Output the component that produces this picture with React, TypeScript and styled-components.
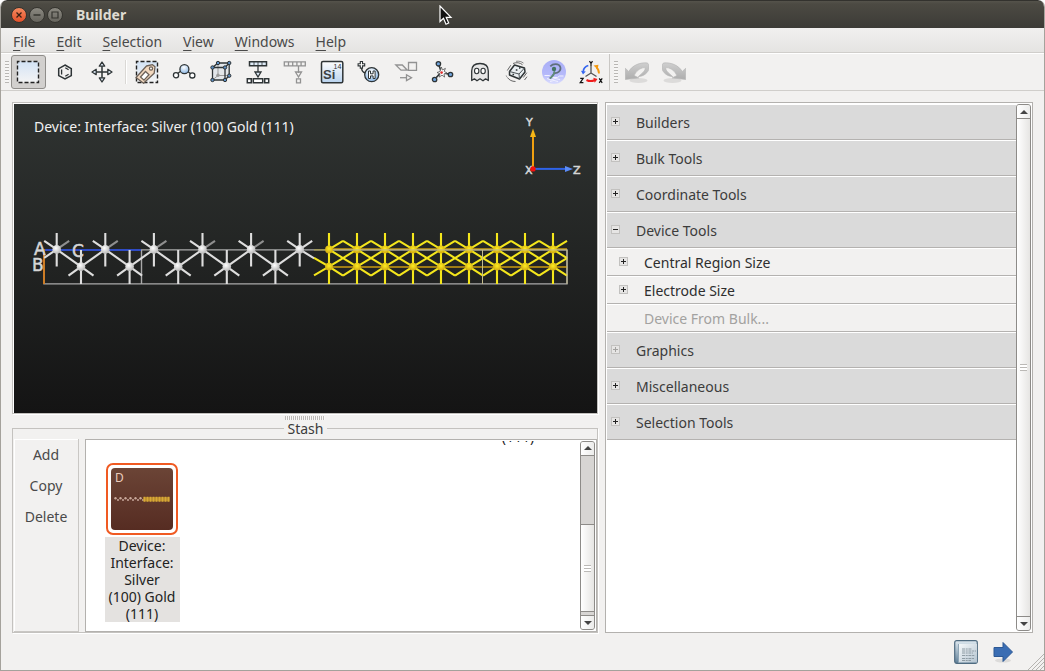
import React from 'react';
import styled, { createGlobalStyle, css } from 'styled-components';

const GlobalStyle = createGlobalStyle`
  *, *::before, *::after { box-sizing: border-box; }
  html, body { margin: 0; background: #fff; }
  body, button {
    font-family: "Noto Sans", "Open Sans", sans-serif;
    font-size: 14px;
    line-height: 20px;
    color: #3c3c3c;
  }
  button { border: 0; padding: 0; background: none; }
  svg { display: block; flex: none; }
`;

/* ---------- window frame ---------- */

const Window = styled.div`
  display: flex;
  flex-direction: column;
  min-height: 100vh;
  background: #f2f1f0;
  border: solid #a5a29c;
  border-width: 0 1px 1px;
  border-radius: 7px 7px 0 0;
  overflow: hidden;
`;

const TitleBar = styled.header`
  display: flex;
  align-items: center;
  gap: 2px;
  height: 28px;
  margin: 0 -1px;
  padding-left: 11px;
  border-top: 1px solid #33322e;
  border-radius: 7px 7px 0 0;
  background: linear-gradient(#55534b, #4c4a43 3px, #3c3b37);
`;

const WindowButton = styled.button<{ $close?: boolean }>`
  display: grid;
  place-items: center;
  width: 16px;
  height: 16px;
  border-radius: 50%;
  border: 1px solid #35342f;
  background: ${p => (p.$close ? 'linear-gradient(#f58a5f, #e4502a)' : 'linear-gradient(#8b8981, #66645d)')};
`;

const WindowTitle = styled.h1`
  margin: 0 0 0 11px;
  font-size: 14px;
  line-height: 20px;
  font-weight: 700;
  color: #dfdbd2;
`;

const MenuBar = styled.nav`
  display: flex;
  height: 25px;
  padding-left: 2px;
  background: linear-gradient(#f1f0ef, #e5e4e2);
  border-bottom: 1px solid #d0cecb;
`;

const MenuButton = styled.button`
  height: 26px;
  padding: 2px 11px 0 10px;
  color: #4a4a4a;
  & > span { text-decoration: underline; text-underline-offset: 3px; }
`;

/* ---------- toolbars ---------- */

const ToolBars = styled.div`
  display: flex;
  height: 38px;
  border-top: 1px solid #fff;
  border-bottom: 1px solid #d0cecb;
`;

const ToolBar = styled.div<{ $divided?: boolean }>`
  display: flex;
  align-items: center;
  gap: 2px;
  padding-left: 4px;
  ${p => p.$divided && css`border-right: 1px solid #c9c7c4;`}
`;

const ToolHandle = styled.span`
  width: 4px;
  height: 22px;
  background: repeating-linear-gradient(#b9b7b4 0 1px, #f7f6f5 1px 3px);
`;

const ToolSeparator = styled.span`
  width: 6px;
  height: 24px;
  padding-left: 3px;
  &::before { content: ''; display: block; width: 2px; height: 24px; background: #dad8d5; border-right: 1px solid #fff; }
`;

const ToolButton = styled.button<{ $active?: boolean }>`
  display: grid;
  place-items: center start;
  width: 35px;
  height: 34px;
  padding-left: 4px;
  border: 1px solid transparent;
  border-radius: 3px;
  ${p => p.$active && css`background: #d2d0ce; border-color: #8f8d8a;`}
`;

/* ---------- main area ---------- */

const Workspace = styled.main`
  display: grid;
  grid-template-columns: minmax(0, 586fr) minmax(0, 428fr);
  gap: 7px;
  flex: 1;
  padding: 11px 11px 0;
`;

const LeftColumn = styled.div`
  display: flex;
  flex-direction: column;
`;

const Viewer = styled.section`
  position: relative;
  flex: 307 1 0;
  min-height: 220px;
  border: 1px solid #c2c0bd;
  box-shadow: inset 1px 1px 0 #fff, 1px 1px 0 #fff;
  padding: 1px 0 0 1px;
`;

const Scene = styled.svg`
  width: 100%;
  height: 100%;
  background: linear-gradient(#303432, #141414);
`;

const SceneTitle = styled.h2`
  position: absolute;
  top: 14px;
  left: 21px;
  margin: 0;
  font-size: 14px;
  line-height: 20px;
  font-weight: 400;
  color: #f0f0f0;
`;

const Splitter = styled.div`
  display: flex;
  justify-content: center;
  height: 6px;
  padding-top: 2px;
  &::before {
    content: '';
    width: 40px;
    height: 4px;
    background: repeating-linear-gradient(90deg, #bcbab7 0 1px, #f9f8f7 1px 2px);
  }
`;

const Stash = styled.fieldset`
  display: flex;
  gap: 6px;
  flex: 209 1 0;
  min-width: 0;
  margin: 0;
  padding: 1px 0 0 1px;
  border: 1px solid #c4c2bf;
  box-shadow: 1px 1px 0 #fff;
`;

const StashLegend = styled.legend`
  margin: 0 auto;
  padding: 0 4px;
  line-height: 18px;
`;

const StashActions = styled.div`
  display: flex;
  flex-direction: column;
  width: 65px;
  padding-top: 1px;
  border: solid #c9c7c4;
  border-width: 0 1px 1px 0;
  box-shadow: inset 1px 1px 0 #fff;
`;

const StashAction = styled.button`
  height: 31px;
  color: #4a4a4a;
`;

const ScrollFrame = styled.div`
  display: flex;
  flex: 1;
  min-width: 0;
  border: 1px solid #b3b1ae;
  padding: 1px;
  background: #fff;
`;

const StashViewport = styled.div`
  flex: 1;
  min-width: 0;
  overflow: hidden;
`;

const StashGrid = styled.div`
  display: grid;
  grid-template-columns: repeat(5, 94px);
  justify-items: center;
  row-gap: 18px;
  margin-top: -13px;
  padding-left: 8px;
`;

const StashItem = styled.figure<{ $column: number }>`
  grid-column: ${p => p.$column};
  display: flex;
  flex-direction: column;
  align-items: center;
  gap: 2px;
  margin: 0;
`;

const Thumbnail = styled.div`
  width: 72px;
  height: 72px;
  padding: 3px;
  border: 2px solid #f05a22;
  border-radius: 7px;
`;

const StashCaption = styled.figcaption<{ $selected?: boolean }>`
  width: 75px;
  padding: 0 3px;
  text-align: center;
  line-height: 17px;
  color: #222;
  ${p => p.$selected && css`background: #e4e2e0;`}
`;

/* ---------- scroll bar ---------- */

const ScrollBar = styled.div`
  display: flex;
  flex-direction: column;
  width: 15px;
  flex: none;
  border: 1px solid #8d8b88;
  border-radius: 3px;
  background: #d7d5d3;
`;

const ScrollButton = styled.button<{ $down?: boolean }>`
  display: grid;
  place-items: center;
  height: 14px;
  background: linear-gradient(90deg, #fff, #ececeb);
  border: 0 solid #8d8b88;
  ${p => (p.$down ? css`border-top-width: 1px; border-radius: 0 0 2px 2px;` : css`border-bottom-width: 1px; border-radius: 2px 2px 0 0;`)}
`;

const ScrollGap = styled.div<{ $grow: number }>`
  flex: ${p => p.$grow} 1 0;
`;

const ScrollThumb = styled.div<{ $grow: number; $edges: boolean }>`
  display: grid;
  place-items: center;
  flex: ${p => p.$grow} 1 0;
  background: linear-gradient(90deg, #fff, #e6e5e3);
  ${p => p.$edges && css`border: solid #8d8b88; border-width: 1px 0;`}
  &::before {
    content: '';
    width: 7px;
    height: 7px;
    background: repeating-linear-gradient(#bbb9b6 0 1px, #fff 1px 3px);
  }
`;

/* ---------- tool tree ---------- */

const ToolTree = styled.aside`
  display: flex;
  min-width: 0;
  border: 1px solid #b3b1ae;
  padding: 1px;
  background: #fff;
`;

const TreeList = styled.div`
  display: flex;
  flex-direction: column;
  flex: 1;
  min-width: 0;
`;

const TreeRow = styled.button<{ $child?: boolean; $muted?: boolean }>`
  display: flex;
  align-items: center;
  gap: 16px;
  text-align: left;
  height: ${p => (p.$child ? 28 : 36)}px;
  padding-top: 2px;
  padding-left: ${p => (p.$child ? 12 : 4)}px;
  background: ${p => (p.$child ? '#f2f1f0' : '#dadada')};
  border: solid;
  border-width: 1px 0;
  border-color: #fff transparent #b4b2b0;
  color: ${p => (p.$muted ? '#a3a2a0' : p.$child ? '#2e2e2e' : '#3c3c3c')};
`;

const ExpandBox = styled.span<{ $dim?: boolean; $hidden?: boolean }>`
  display: grid;
  place-items: center;
  width: 9px;
  height: 9px;
  margin-bottom: 4px;
  border: 1px solid #c2c1bf;
  background: #e6e5e4;
  color: ${p => (p.$dim ? '#a3a2a0' : '#222')};
  ${p => p.$hidden && css`visibility: hidden;`}
`;

const Footer = styled.footer`
  display: flex;
  justify-content: flex-end;
  align-items: center;
  gap: 13px;
  height: 37px;
`;

const FooterButton = styled.button`
  display: grid;
  place-items: center;
  width: 24px;
  height: 24px;
`;

const Pointer = styled.svg`
  position: absolute;
  left: 439px;
  top: 5px;
`;

/* ---------- icons ---------- */

const ink = '#2e3436';
const pale = '#dfebf7';

const Icon = ({ children }: { children: React.ReactNode }) => (
  <svg width="24" height="24" viewBox="0 0 24 24" fill="none" stroke={ink} strokeWidth="1.3" aria-hidden="true">
    {children}
  </svg>
);

const dashed = (
  <rect x="1.5" y="1.5" width="21" height="21" fill="url(#sky)" stroke="#222" strokeWidth="1.4" strokeDasharray="4 2" strokeDashoffset="2" />
);

const Gradients = () => (
  <svg width="0" height="0" aria-hidden="true">
    <defs>
      <linearGradient id="sky" x1="0" y1="0" x2="0" y2="1">
        <stop offset="0" stopColor="#d3e3f5" />
        <stop offset="1" stopColor="#f4f4f4" />
      </linearGradient>
      <linearGradient id="element" x1="0" y1="0" x2="0" y2="1">
        <stop offset="0" stopColor="#fdfdfd" />
        <stop offset="1" stopColor="#b9d3ef" />
      </linearGradient>
      <radialGradient id="ball" cx=".45" cy=".3" r=".8">
        <stop offset="0" stopColor="#fff" />
        <stop offset="1" stopColor="#78abe0" />
      </radialGradient>
      <linearGradient id="lavender" x1="0" y1="0" x2="0" y2="1">
        <stop offset="0" stopColor="#a9aef6" />
        <stop offset=".6" stopColor="#b5b9fa" />
        <stop offset="1" stopColor="#dcdefe" />
      </linearGradient>
      <linearGradient id="grayArrow" x1="0" y1="0" x2="0" y2="1">
        <stop offset="0" stopColor="#cfcfcf" />
        <stop offset="1" stopColor="#adadad" />
      </linearGradient>
      <linearGradient id="paper" x1="0" y1="0" x2="1" y2="1">
        <stop offset="0" stopColor="#f6f9fb" />
        <stop offset="1" stopColor="#b4c4d0" />
      </linearGradient>
      <linearGradient id="cover" x1="0" y1="0" x2="0" y2="1">
        <stop offset="0" stopColor="#dfe9f0" />
        <stop offset="1" stopColor="#5f7f98" />
      </linearGradient>
      <linearGradient id="brown" x1="0" y1="0" x2="0" y2="1">
        <stop offset="0" stopColor="#6b4436" />
        <stop offset="1" stopColor="#562c22" />
      </linearGradient>
      <radialGradient id="silver" cx=".4" cy=".35" r=".7">
        <stop offset="0" stopColor="#fff" />
        <stop offset="1" stopColor="#b4b4b4" />
      </radialGradient>
      <radialGradient id="gold" cx=".5" cy=".4" r=".7">
        <stop offset="0" stopColor="#ffee20" />
        <stop offset="1" stopColor="#c79b10" />
      </radialGradient>
    </defs>
  </svg>
);

type Tool = { label: string; icon: React.ReactNode; active?: boolean };

const selectionTools: Tool[] = [
  { label: 'Select', active: true, icon: dashed },
  {
    label: 'Molecule builder',
    icon: (
      <>
        <path d="M12 5l6.3 3.6v7L12 19l-6.300-3.400v-7z" strokeWidth="1.500" />
        <path d="M8.600 9.500v5M12.300 7.800l3.300 2M12.300 16.300l3.300-2" />
      </>
    ),
  },
  {
    label: 'Move',
    icon: (
      <>
        <path d="M12 5v14M5 12h14" strokeWidth="1.500" />
        <path d="M12 2l2.700 4.200H9.300zM12 22l2.700-4.200H9.300zM2 12l4.200-2.700v5.400zM22 12l-4.200-2.700v5.400z" fill={pale} strokeLinejoin="round" />
      </>
    ),
  },
];

const buildTools: Tool[] = [
  {
    label: 'Tags',
    icon: (
      <>
        {dashed}
        <path d="M1 17.500L11.500 6l6-1.300 2.500 2-.8 6.500L8.500 23.300z" fill="#f3d9c0" stroke="#6d6259" strokeLinejoin="round" />
        <path d="M5.500 17l5-5.500 3.500 3.200-5 5.500z" fill="#fff" stroke="#6d6259" />
        <circle cx="16" cy="8.500" r="1.600" fill="#fff" stroke="#6d6259" />
      </>
    ),
  },
  {
    label: 'Bonds',
    icon: (
      <>
        <path d="M5 14l4-3M15 11l4 3" />
        <circle cx="12.400" cy="9.200" r="4.500" fill="url(#ball)" />
        <circle cx="4" cy="15.200" r="2.600" fill="#fff" />
        <circle cx="20.300" cy="15.400" r="2.600" fill="#fff" />
      </>
    ),
  },
  {
    label: 'Supercell',
    icon: (
      <>
        <path d="M3.500 7.500L9 3h11v12.700L16 20H3.500z" fill="#e2e6ea" stroke="none" />
        <path d="M9 3v12.500h11M9 15.500L3.500 20" stroke="#999" strokeWidth="1" />
        <path d="M3.500 7.500H16V20H3.500zM3.500 7.500L9 3h11.200v12.700L16 20M16 7.500L20.200 3" />
        {[[3.5, 7.5], [16, 7.5], [3.5, 20], [16, 20], [9, 3], [20.2, 3], [20.2, 15.7]].map(([x, y]) => (
          <circle key={`${x}-${y}`} cx={x} cy={y} r="1.700" fill="#5d8fc4" strokeWidth="1" />
        ))}
        <circle cx="9" cy="15.200" r="1.700" fill="#999" stroke="none" />
      </>
    ),
  },
  {
    label: 'Split device',
    icon: (
      <>
        <path d="M3.500 1.800h17v4h-17z" fill={pale} strokeWidth="1.500" />
        <path d="M8 2v3.600M12 2v3.600M16 2v3.600" strokeWidth=".8" />
        <path d="M12 6v7" />
        <path d="M9 12h6l-3 5z" fill={pale} />
        <path d="M1.300 18.800h4v4h-4zM7.300 18.800h9.400v4H7.300zM18.700 18.800h4v4h-4z" fill="#fff" strokeWidth="1.500" />
      </>
    ),
  },
  {
    label: 'Device from bulk',
    icon: (
      <g stroke="#929292">
        <path d="M1.300 1.800h21v4h-21zM5.500 2v3.600M9.700 2v3.600M13.900 2v3.600M18.100 2v3.600" />
        <path d="M15.500 6v7M12.500 12h6l-3 5zM13.500 18.800h4v4h-4z" />
      </g>
    ),
  },
  {
    label: 'Periodic table',
    icon: (
      <>
        <rect x="1.500" y="1.500" width="21.300" height="21.300" rx="1.500" fill="url(#element)" strokeWidth="1.500" />
        <text x="3" y="19" fontFamily="Liberation Sans, sans-serif" fontSize="13" fontWeight="700" fill="#3c4144" stroke="none">Si</text>
        <text x="13.500" y="8.500" fontFamily="Liberation Sans, sans-serif" fontSize="7" fill="#333" stroke="none">14</text>
      </>
    ),
  },
  {
    label: 'Add hydrogen',
    icon: (
      <>
        <path d="M4.500 7c0 3 1 5.500 4 6" />
        <circle cx="14.700" cy="14.700" r="7" fill="url(#ball)" />
        <path d="M11.500 11v7.500h2v-2.600h2.600v2.600h2V11h-2v2.800h-2.600V11z" fill="#fff" strokeWidth="1" />
        <path d="M3.300 1.500h2.200v2.200h2.200v2.200H5.500v2.200H3.300V5.900H1.100V3.700h2.200z" fill="#fff" strokeWidth="1.100" />
      </>
    ),
  },
  {
    label: 'Shear',
    icon: (
      <g stroke="#929292">
        <path d="M1.800 5h6.500l5 5.200H7zM14.500 2.500h8v7.800h-8z" />
        <path d="M6 17.700h7" />
        <path d="M12.500 14.800l5 2.900-5 2.900z" />
      </g>
    ),
  },
  {
    label: 'Optimize geometry',
    icon: (
      <>
        <path d="M7.500 4l2.800 8L4 19M10.500 12.500l9 2" strokeWidth="1.600" />
        <path d="M10.400 7l1 3 3-1.600-1.200 3 2.800 1.600-3 .9.600 3.200-2.600-2-2.800 2 .800-3.300L6 12.500l3-1z" fill="#fff" stroke="#555" strokeWidth=".8" />
        <circle cx="10.600" cy="12.600" r="1.300" fill="#e03030" stroke="none" />
        <circle cx="7.400" cy="3.800" r="2.200" fill="#6fa3dc" />
        <circle cx="19.500" cy="14.500" r="2.200" fill="#6fa3dc" />
        <circle cx="3.600" cy="19.500" r="2.200" fill="#6fa3dc" />
      </>
    ),
  },
  {
    label: 'Ghost atoms',
    icon: (
      <>
        <path d="M3.700 20.500V11c0-5 3.500-7.500 8.300-7.500S20.300 6 20.300 11v9.500l-2.700-1.700-2.600 2-3-2-3 2-2.600-2z" fill="#e7e7e7" strokeLinejoin="round" />
        <ellipse cx="8.700" cy="11" rx="2.200" ry="2.700" fill="#fff" strokeWidth="1.100" />
        <ellipse cx="15.100" cy="11" rx="2.200" ry="2.700" fill="#fff" strokeWidth="1.100" />
      </>
    ),
  },
  {
    label: 'Rattle',
    icon: (
      <>
        <path d="M9.500 5L19.500 8l.5 4-5.500 7L4.500 15V11.500z" fill="#e9eef1" strokeLinejoin="round" strokeWidth="1.500" />
        <path d="M4.500 11.500l9.500 2.500 5.500-6M14 14l.5 5" strokeWidth="1" stroke="#4d5559" />
        <path d="M7.500 14.500h1.600M10.800 10h1.600M14 8h1.400" strokeWidth="1.500" />
        <path d="M2.300 10.500l3.500-5.300M8 3.500c3.500-1.500 7-.8 9.500 1.200M18.300 17.500l3.500-4.800M19.500 20l2.500-3.300M2.500 17.500c1.500 2.500 4.500 4 8 4" stroke="#666" strokeWidth="1" />
        <path d="M11 1.300c3-.5 5.500.3 7.500 1.800M1.200 15.500c.2.700.4 1.200.8 1.700" stroke="#888" strokeWidth="1" />
      </>
    ),
  },
  {
    label: 'Python console',
    icon: (
      <>
        <circle cx="12" cy="12" r="12" fill="url(#lavender)" stroke="none" />
        <path d="M2.500 15.500h5l2 2h6l2-1.500h4M5 18.500l4 1.500 4-1.500 5 1M8 21.500l4-1 4 1" stroke="#f1f2ff" strokeWidth="1" />
        <path d="M8.300 6.300C11 3.500 17 3.300 18.300 7c1.200 4-2.700 6.300-6 6-1.300 2-2.300 4.500-4.600 5.200" stroke="#5f6f7c" strokeWidth="1.700" />
        <circle cx="12" cy="9" r="2.200" fill="#457463" stroke="none" />
        <path d="M12.500 11l-1 4-3.500 3.500" stroke="#5f8f78" strokeWidth="1.500" />
      </>
    ),
  },
  {
    label: 'Rotate axes',
    icon: (
      <>
        <path d="M12 6v7M12 13l-5.500 3.500M12 13l5.500 3.500" stroke="#555" strokeWidth="1.300" />
        <path d="M9.300 5.500C6 6.500 4.500 8.500 4.200 11.500" stroke="#3465f0" strokeWidth="1.700" />
        <path d="M2 10.800l4.800.6-2.800 3z" fill="#3465f0" stroke="none" />
        <path d="M20 13.500c0-2.500-.7-4.500-2.500-6" stroke="#f59a10" strokeWidth="1.800" />
        <path d="M14.500 5.500l5-.7-1 4.400z" fill="#f59a10" stroke="none" />
        <path d="M7.500 20c2.500 1.300 5.500 1.300 8 .3" stroke="#ef1c1c" strokeWidth="2" />
        <path d="M14.300 17.800l4.200 1.200-2.800 3.800z" fill="#ef1c1c" stroke="none" />
        <path d="M10.500 1.200L12 3.500l1.500-2.300M12 3.500V6" stroke="#111" strokeWidth="1.200" />
        <path d="M1.200 18.400h3l-3 4.300h3.200M20.200 18.400l3 4.500M23.200 18.400l-3 4.500" stroke="#111" strokeWidth="1.200" />
      </>
    ),
  },
];

const undoPath = (
  <>
    <ellipse cx="13.500" cy="20.500" rx="9" ry="2.500" fill="#dcdbda" stroke="none" />
    <path
      d="M.3 8.300v11.200l13.500-1.600-4.600-2.300c1.500-4 5.500-7.500 9.800-8 1.800 0 1.500 1.800-.2 3.800-1.600 2-3.800 3.900-5.500 5.200 3.500-.2 6.500-1.600 8.500-3.900 3.200-3.500 3-8.700.4-9.700C15.500 2.200 7.500 5 3.800 11.500z"
      fill="url(#grayArrow)" stroke="#b8b8b8" strokeWidth=".7"
    />
  </>
);

const historyTools: Tool[] = [
  { label: 'Undo', icon: undoPath },
  { label: 'Redo', icon: <g transform="translate(24 0) scale(-1 1)">{undoPath}</g> },
];

const ToolButtons = ({ tools }: { tools: Tool[] }) => (
  <>
    {tools.map(t => (
      <ToolButton key={t.label} aria-label={t.label} $active={t.active}>
        <Icon>{t.icon}</Icon>
      </ToolButton>
    ))}
  </>
);

/* ---------- crystal scene ---------- */

const silverTop = [0, 1, 2, 3, 4, 5].map(i => 42.7 + i * 48.6);
const silverBottom = [0, 1, 2, 3, 4].map(i => 67 + i * 48.6);
const goldColumns = [0, 1, 2, 3, 4, 5, 6, 7, 8].map(i => 315 + i * 28);
const TOP = 144.5;
const LOW = 161.7;

const Crystal = () => (
  <Scene viewBox="0 0 583 307" preserveAspectRatio="xMidYMid meet" fill="none" role="img" aria-label="Silver and gold device">
    <path d="M30 145H553V179H30zM127.500 145v34" stroke="#a9a9a9" strokeWidth="1.400" />
    <path d="M30 145H127" stroke="#2f4bc4" strokeWidth="2" />
    <path d="M30 144v35" stroke="#e07c10" strokeWidth="1.600" />
    <g stroke="#dedede" strokeWidth="2.100">
      {silverTop.map((x, i) => (
        <React.Fragment key={x}>
          <path d={`M${x} 128V161.500M${x} ${TOP}l-12.500-8.500`} />
          <path d={`M${x} ${TOP}l12.500-8.500`} stroke={i === 5 ? '#dedede' : '#8f8f8f'} />
          <path d={i === 5 ? `M${x} ${TOP}l14.500 9` : `M${x} ${TOP}L${x + 24.3} ${LOW}`} />
          <path d={i === 0 ? `M${x} ${TOP}l-12.500 8.500` : `M${x} ${TOP}L${x - 24.3} ${LOW}`} />
        </React.Fragment>
      ))}
      {silverBottom.map(x => (
        <path key={x} d={`M${x} 145V179M${x - 12.5} ${LOW + 9}L${x} ${LOW}l12.500 9`} />
      ))}
    </g>
    {silverTop.map(x => <circle key={x} cx={x} cy={TOP} r="4.300" fill="url(#silver)" />)}
    {silverBottom.map(x => <circle key={x} cx={x} cy={LOW} r="4.300" fill="url(#silver)" />)}
    <path d="M300 145h15" stroke="#a99e45" strokeWidth="1.200" />
    <path d={`M315 ${LOW + 0.5}H553M315 144H553`} stroke="#c99a12" strokeWidth="1.500" />
    <g stroke="#f4e61c" strokeWidth="2.100">
      <path d={`M300 153L315 ${LOW}L300 170.500`} />
      {goldColumns.map(x => (
        <path
          key={x}
          d={`M${x} 128V179M${x} ${TOP}l14-8.500M${x} ${TOP}l14 8.700M${x} ${LOW}l14-8.500M${x} ${LOW}l14 9`}
        />
      ))}
      {goldColumns.slice(1).map(x => (
        <path
          key={x}
          d={`M${x} ${TOP}l-14-8.500M${x} ${TOP}l-14 8.700M${x} ${LOW}l-14-8.500M${x} ${LOW}l-14 9`}
        />
      ))}
    </g>
    {goldColumns.map(x => (
      <React.Fragment key={x}>
        <circle cx={x} cy={TOP} r="3.900" fill="url(#gold)" />
        <circle cx={x} cy={LOW} r="3.900" fill="url(#gold)" />
      </React.Fragment>
    ))}
    <path d="M319 145H553M468.500 145v34M553 145v34" stroke="#c4bc8c" strokeWidth="1" />
    <g fontFamily="DejaVu Sans, sans-serif" fill="#d6d6d6" stroke="#d6d6d6" strokeWidth=".5">
      <text x="20" y="150" fontSize="17">A</text>
      <text x="18" y="166" fontSize="17">B</text>
      <text x="58" y="152" fontSize="17">C</text>
      <text x="512" y="21" fontSize="11">Y</text>
      <text x="511" y="69" fontSize="11">X</text>
      <text x="559" y="69" fontSize="11">Z</text>
    </g>
    <path d="M519 62V31" stroke="#f0a010" strokeWidth="2" />
    <path d="M516 32l3-8.500 3 8.500z" fill="#f7b716" />
    <path d="M521 64h32" stroke="#2f63e8" strokeWidth="2" />
    <path d="M551 61l8 3-8 3z" fill="#5b8cf8" />
    <circle cx="519" cy="64" r="2.700" fill="#f01010" />
  </Scene>
);

/* ---------- small pieces ---------- */

const Scroller = ({ before, thumb, after }: { before: number; thumb: number; after: number }) => (
  <ScrollBar>
    <ScrollButton aria-label="Scroll up">
      <svg width="8" height="4" viewBox="0 0 8 4"><path d="M0 4l4-4 4 4z" fill="#444" /></svg>
    </ScrollButton>
    {before > 0 && <ScrollGap $grow={before} />}
    <ScrollThumb $grow={thumb} $edges={before > 0} />
    {after > 0 && <ScrollGap $grow={after} />}
    <ScrollButton $down aria-label="Scroll down">
      <svg width="8" height="4" viewBox="0 0 8 4"><path d="M0 0l4 4 4-4z" fill="#444" /></svg>
    </ScrollButton>
  </ScrollBar>
);

type Row = { label: string; child?: boolean; open?: boolean; dim?: boolean; leaf?: boolean };

const rows: Row[] = [
  { label: 'Builders' },
  { label: 'Bulk Tools' },
  { label: 'Coordinate Tools' },
  { label: 'Device Tools', open: true },
  { label: 'Central Region Size', child: true },
  { label: 'Electrode Size', child: true },
  { label: 'Device From Bulk...', child: true, leaf: true },
  { label: 'Graphics', dim: true },
  { label: 'Miscellaneous' },
  { label: 'Selection Tools' },
];

export default function App() {
  return (
    <>
      <GlobalStyle />
      <Window>
        <TitleBar>
          <WindowButton $close aria-label="Close">
            <svg width="6" height="6" viewBox="0 0 6 6"><path d="M.5.5l5 5M5.500.5l-5 5" stroke="#3a2014" strokeWidth="1.300" /></svg>
          </WindowButton>
          <WindowButton aria-label="Minimize">
            <svg width="8" height="8" viewBox="0 0 8 8"><path d="M.5 4h7" stroke="#35342f" strokeWidth="1.300" /></svg>
          </WindowButton>
          <WindowButton aria-label="Maximize">
            <svg width="8" height="8" viewBox="0 0 8 8"><path d="M1 1h6v6H1z" fill="none" stroke="#35342f" strokeWidth="1.200" /></svg>
          </WindowButton>
          <WindowTitle>Builder</WindowTitle>
        </TitleBar>
        <MenuBar>
          {['File', 'Edit', 'Selection', 'View', 'Windows', 'Help'].map(m => (
            <MenuButton key={m}><span>{m[0]}</span>{m.slice(1)}</MenuButton>
          ))}
        </MenuBar>
        <ToolBars>
          <ToolBar $divided>
            <ToolHandle />
            <ToolButtons tools={selectionTools} />
            <ToolSeparator />
            <ToolButtons tools={buildTools} />
          </ToolBar>
          <ToolBar>
            <ToolHandle />
            <ToolButtons tools={historyTools} />
          </ToolBar>
        </ToolBars>
        <Workspace>
          <LeftColumn>
            <Viewer>
              <Crystal />
              <SceneTitle>Device: Interface: Silver (100) Gold (111)</SceneTitle>
            </Viewer>
            <Splitter />
            <Stash>
              <StashLegend>Stash</StashLegend>
              <StashActions>
                <StashAction>Add</StashAction>
                <StashAction>Copy</StashAction>
                <StashAction>Delete</StashAction>
              </StashActions>
              <ScrollFrame>
                <StashViewport>
                  <StashGrid>
                    <StashItem $column={5}>
                      <StashCaption>(111)</StashCaption>
                    </StashItem>
                    <StashItem $column={1}>
                      <Thumbnail>
                        <svg width="62" height="62" viewBox="0 0 62 62">
                          <rect width="62" height="62" rx="4" fill="url(#brown)" />
                          <text x="4" y="14" fontFamily="Noto Sans, sans-serif" fontSize="12" fill="#eccdbd">D</text>
                          <g fill="#c9a99c">
                            {[0, 1, 2, 3, 4, 5].map(i => (
                              <React.Fragment key={i}>
                                <circle cx={4.5 + i * 5} cy="30.300" r="1.200" />
                                <circle cx={7 + i * 5} cy="32" r="1" />
                              </React.Fragment>
                            ))}
                          </g>
                          <path d="M32.500 31.200h26" stroke="#a87a2a" strokeWidth="4" />
                          <path d="M32.500 31.200h26" stroke="#d8a936" strokeWidth="5" strokeDasharray="2 1" />
                        </svg>
                      </Thumbnail>
                      <StashCaption $selected>Device: Interface: Silver (100) Gold (111)</StashCaption>
                    </StashItem>
                  </StashGrid>
                </StashViewport>
                <Scroller before={69} thumb={87} after={3} />
              </ScrollFrame>
            </Stash>
          </LeftColumn>
          <ToolTree>
            <TreeList>
              {rows.map(r => (
                <TreeRow key={r.label} $child={r.child} $muted={r.leaf} aria-expanded={r.leaf ? undefined : !!r.open}>
                  <ExpandBox $dim={r.dim} $hidden={r.leaf}>
                    <svg width="5" height="5" viewBox="0 0 5 5">
                      <path d={r.open ? 'M0 2.500h5' : 'M0 2.500h5M2.500 0v5'} stroke="currentColor" />
                    </svg>
                  </ExpandBox>
                  {r.label}
                </TreeRow>
              ))}
            </TreeList>
            <Scroller before={0} thumb={1} after={0} />
          </ToolTree>
        </Workspace>
        <Footer>
          <FooterButton aria-label="Log">
            <svg width="24" height="24" viewBox="0 0 24 24">
              <rect x=".7" y=".7" width="22.600" height="22.600" rx="2" fill="url(#cover)" stroke="#4f6b80" strokeWidth="1.200" />
              <path d="M4.500 4H23v18.500H4.500z" fill="url(#paper)" />
              <path d="M4.500 4v18.500" stroke="#8fa6b6" />
              <path d="M8 9h10M8 11h14M8 13h11M8 15.500h13M8 18.500h12M8 20.500h9" stroke="#87949d" strokeWidth=".9" strokeDasharray="3 .7 2 .7" />
            </svg>
          </FooterButton>
          <FooterButton aria-label="Send to">
            <svg width="24" height="24" viewBox="0 0 24 24">
              <ellipse cx="12" cy="20.500" rx="8" ry="2" fill="#dcdbda" />
              <path d="M3 7.500h9V2.500l9.500 9.500-9.500 9.500v-5H3z" fill="#3a6db3" stroke="#2c5894" />
            </svg>
          </FooterButton>
          <svg width="16" height="37" viewBox="0 0 16 37">
            <path d="M0 37L16 21M4 37L16 25M8 37l8-8M12 37l4-4" stroke="#b5b3b0" />
          </svg>
        </Footer>
      </Window>
      <Pointer width="14" height="21" viewBox="0 0 14 21">
        <path d="M1 1v15.500l3.500-3.300 2.500 6 2.700-1.200-2.500-5.600H12z" fill="#111" stroke="#fff" strokeWidth="1.200" />
      </Pointer>
      <Gradients />
    </>
  );
}
